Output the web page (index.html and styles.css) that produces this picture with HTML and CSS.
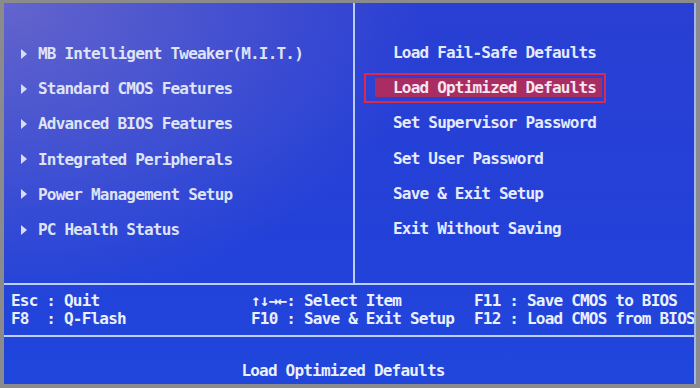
FILE: index.html
```html
<!DOCTYPE html>
<html>
<head>
<meta charset="utf-8">
<link rel="stylesheet" href="styles.css">
</head>
<body>
<div class="screen">
  <div class="top">
    <ul class="menu-left">
      <li><span class="arrow"></span>MB Intelligent Tweaker(M.I.T.)</li>
      <li><span class="arrow"></span>Standard CMOS Features</li>
      <li><span class="arrow"></span>Advanced BIOS Features</li>
      <li><span class="arrow"></span>Integrated Peripherals</li>
      <li><span class="arrow"></span>Power Management Setup</li>
      <li><span class="arrow"></span>PC Health Status</li>
    </ul>
    <ul class="menu-right">
      <li><span class="bar">Load Fail-Safe Defaults</span></li>
      <li class="selected"><span class="bar">Load Optimized Defaults</span></li>
      <li><span class="bar">Set Supervisor Password</span></li>
      <li><span class="bar">Set User Password</span></li>
      <li><span class="bar">Save &amp; Exit Setup</span></li>
      <li><span class="bar">Exit Without Saving</span></li>
    </ul>
  </div>
  <div class="hline"></div>
  <div class="help">
    <span>Esc : Quit</span>
    <span>↑↓→←: Select Item</span>
    <span>F11 : Save CMOS to BIOS</span>
    <span>F8  : Q-Flash</span>
    <span>F10 : Save &amp; Exit Setup</span>
    <span>F12 : Load CMOS from BIOS</span>
  </div>
  <div class="hline"></div>
  <div class="status">Load Optimized Defaults</div>
</div>
</body>
</html>
```

FILE: styles.css
```css
* { box-sizing: border-box; }
html, body { margin: 0; padding: 0; }
body {
  width: 700px;
  height: 388px;
  background: #8b8b8d;
  padding: 3px 4px 4px 4px;
  overflow: hidden;
  font-family: "DejaVu Sans Mono", "Liberation Mono", monospace;
  font-weight: bold;
  font-size: 16px;
  letter-spacing: -0.8px;
  color: #e4eaff;
}
.screen {
  width: 692px;
  height: 381px;
  display: flex;
  flex-direction: column;
  overflow: hidden;
  border-right: 2px solid #9fb6f0;
  background:
    radial-gradient(ellipse 420px 300px at 0% 0%, rgba(130,120,200,0.65), rgba(130,120,200,0) 100%),
    linear-gradient(180deg, #2a3fd3 0%, #2341d8 60%, #2046dc 100%);
}
.top {
  height: 280px;
  display: flex;
}
ul { list-style: none; margin: 0; padding: 0; }
.menu-left {
  width: 351px;
  border-right: 2px solid #b9ccfa;
  padding: 33px 0 0 17px;
  color: #dfe3f6;
}
.menu-left li {
  height: 35.2px;
  line-height: 35.2px;
  display: flex;
  align-items: center;
  white-space: pre;
}
.arrow {
  width: 17px;
  height: 10px;
  display: inline-block;
  position: relative;
}
.arrow::before {
  content: "";
  position: absolute;
  left: 0;
  top: 0;
  border-left: 6px solid #d9ddf3;
  border-top: 5px solid transparent;
  border-bottom: 5px solid transparent;
}
.menu-right {
  flex: 1;
  padding: 35px 0 0 9px;
  display: flex;
  flex-direction: column;
  gap: 5.2px;
}
.menu-right li {
  width: 242px;
  height: 30px;
  border: 2px solid transparent;
  padding: 3px 2px 4px 9px;
  display: flex;
}
.bar {
  flex: 1;
  padding-left: 18px;
  line-height: 19px;
  white-space: pre;
}
.menu-right li.selected {
  border-color: #dc2a48;
}
.menu-right li.selected .bar {
  background: #a92c62;
  color: #f4e6f0;
}
.hline {
  height: 2px;
  background: #bcd0ff;
  flex: none;
}
.help {
  height: 50px;
  padding: 7px 0 0 7px;
  display: grid;
  grid-template-columns: 240px 223px 240px;
  grid-auto-rows: 18px;
  line-height: 18px;
  color: #eaf0ff;
  white-space: pre;
}
.status {
  flex: 1;
  padding: 25px 12px 0 0;
  line-height: 18px;
  text-align: center;
  color: #eaf0ff;
  white-space: pre;
}
```
